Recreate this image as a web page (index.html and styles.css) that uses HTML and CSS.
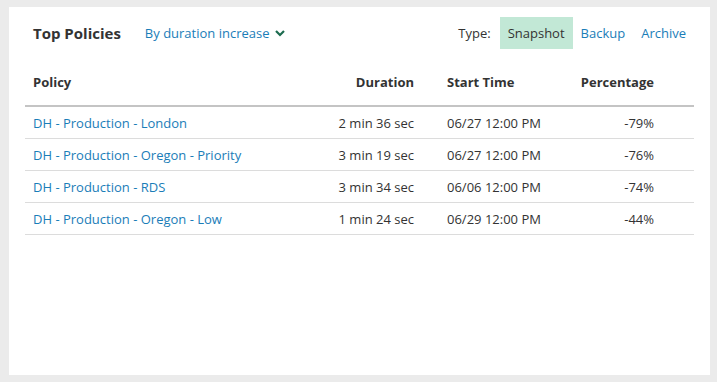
FILE: index.html
```html
<!DOCTYPE html>
<html>
<head>
<meta charset="utf-8">
<link rel="stylesheet" href="styles.css">
</head>
<body>
<div class="card">
  <div class="head">
    <div class="left">
      <h2 class="title">Top Policies</h2>
      <a class="sort">By duration increase
        <svg class="chev" width="10" height="7" viewBox="0 0 10 7"><path d="M1 1 L5 5 L9 1" fill="none" stroke="#1c6b4f" stroke-width="2.2"/></svg>
      </a>
    </div>
    <div class="right">
      <span class="type-label">Type:</span>
      <a class="tab active">Snapshot</a>
      <a class="tab">Backup</a>
      <a class="tab">Archive</a>
    </div>
  </div>
  <table class="tbl">
    <colgroup>
      <col class="c-policy"><col class="c-dur"><col class="c-start"><col class="c-pct"><col class="c-rest">
    </colgroup>
    <thead>
      <tr><th class="l">Policy</th><th class="r">Duration</th><th class="l start">Start Time</th><th class="r">Percentage</th><th></th></tr>
    </thead>
    <tbody>
      <tr><td><a>DH - Production - London</a></td><td class="r">2 min 36 sec</td><td class="start">06/27 12:00 PM</td><td class="r">-79%</td><td></td></tr>
      <tr><td><a>DH - Production - Oregon - Priority</a></td><td class="r">3 min 19 sec</td><td class="start">06/27 12:00 PM</td><td class="r">-76%</td><td></td></tr>
      <tr><td><a>DH - Production - RDS</a></td><td class="r">3 min 34 sec</td><td class="start">06/06 12:00 PM</td><td class="r">-74%</td><td></td></tr>
      <tr><td><a>DH - Production - Oregon - Low</a></td><td class="r">1 min 24 sec</td><td class="start">06/29 12:00 PM</td><td class="r">-44%</td><td></td></tr>
    </tbody>
  </table>
</div>
</body>
</html>
```
FILE: styles.css
```css
html, body {
  margin: 0;
  padding: 0;
  background: #ebebeb;
  font-family: "Open Sans", "Liberation Sans", sans-serif;
  color: #333;
  font-size: 13px;
}
body {
  padding: 7px 7px 7px 9px;
  height: 382px;
  box-sizing: border-box;
}
.card {
  background: #fff;
  width: 701px;
  height: 368px;
  box-sizing: border-box;
  padding: 10px 16px;
}
.head {
  display: flex;
  justify-content: space-between;
  align-items: center;
  height: 32px;
}
.left {
  display: flex;
  align-items: center;
}
.title {
  margin: 0;
  padding-left: 8px;
  font-size: 15px;
  font-weight: 700;
  color: #333;
}
.sort {
  margin-left: 24px;
  color: #1a7db8;
  display: flex;
  align-items: center;
}
.chev {
  margin-left: 5px;
}
.right {
  display: flex;
  align-items: center;
  height: 32px;
}
.type-label {
  margin-right: 9px;
  color: #333;
}
.tab {
  color: #1a7db8;
  padding: 0 8px;
  height: 32px;
  line-height: 32px;
}
.tab.active {
  background: #c2e8d6;
  color: #333;
}
.tbl {
  margin-top: 10px;
  width: 669px;
  border-collapse: collapse;
  table-layout: fixed;
}
.c-policy { width: 275px; }
.c-dur { width: 122px; }
.c-start { width: 140px; }
.c-pct { width: 100px; }
.c-rest { width: 32px; }
th {
  font-weight: 700;
  height: 46px;
  padding: 0 8px;
  border-bottom: 2px solid #c4c4c4;
  vertical-align: middle;
}
td {
  height: 31px;
  padding: 0 8px;
  border-bottom: 1px solid #dcdcdc;
  vertical-align: middle;
  white-space: nowrap;
}
.l { text-align: left; }
.r { text-align: right; }
.start { padding-left: 25px; text-align: left; }
td a { color: #1a7db8; }
```
